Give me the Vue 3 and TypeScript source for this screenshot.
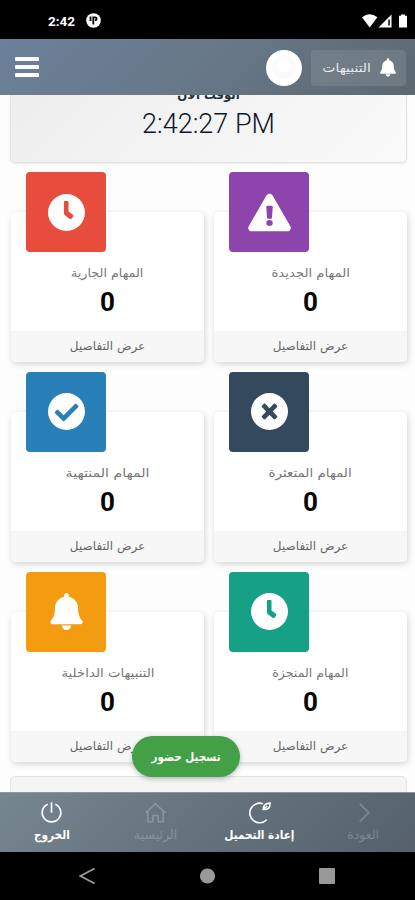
<script setup lang="ts">
type IconName = 'clock' | 'warning' | 'cross' | 'check' | 'bell'

interface TaskCard {
  title: string
  count: number
  color: string
  icon: IconName
  stretch: number
}

const cards: TaskCard[] = [
  { title: 'المهام الجديدة', count: 0, color: '#8e44ad', icon: 'warning', stretch: 1.1 },
  { title: 'المهام الجارية', count: 0, color: '#e74c3c', icon: 'clock', stretch: 1.06 },
  { title: 'المهام المتعثرة', count: 0, color: '#34495e', icon: 'cross', stretch: 1.12 },
  { title: 'المهام المنتهية', count: 0, color: '#2980b9', icon: 'check', stretch: 1.18 },
  { title: 'المهام المنجزة', count: 0, color: '#16a085', icon: 'clock', stretch: 1.05 },
  { title: 'التنبيهات الداخلية', count: 0, color: '#f39c12', icon: 'bell', stretch: 1.11 },
]

const iconPaths: Record<IconName, string> = {
  clock:
    'M256 0a256 256 0 1 1 0 512a256 256 0 1 1 0-512zM220 112V262c0 14 5 24 15 32l62 48c12 9 26 7 35-5l13-18c9-12 7-26-5-35L284 243V112c0-9-6-15-15-15h-34c-9 0-15 6-15 15z',
  warning:
    'M256 32c14 0 27 7 35 20l213 368c7 12 7 27 0 40s-20 20-35 20H43c-15 0-28-8-35-20s-7-28 0-40L221 52c8-13 21-20 35-20zM218 195l8 120c1 10 7 16 15 16h30c8 0 14-6 15-16l8-120c1-12-5-19-16-19h-44c-11 0-17 7-16 19zM256 346a38 34 0 1 0 0 68a38 34 0 1 0 0-68z',
  cross:
    'M256 0a256 256 0 1 1 0 512a256 256 0 1 1 0-512zM154 198l58 58l-58 58c-8 8-8 18 0 26l20 20c8 8 18 8 26 0l56-58l56 58c8 8 18 8 26 0l20-20c8-8 8-18 0-26l-58-58l58-58c8-8 8-18 0-26l-20-20c-8-8-18-8-26 0l-56 58l-56-58c-8-8-18-8-26 0l-20 20c-8 8-8 18 0 26z',
  check:
    'M256 0a256 256 0 1 1 0 512a256 256 0 1 1 0-512zM227 387L417 197c6-6 6-16 0-22l-23-23c-6-6-16-6-22 0L216 308l-73-73c-6-6-16-6-22 0l-23 23c-6 6-6 16 0 22l107 107c6 6 16 6 22 0z',
  bell:
    'M224 0c-18 0-32 14-32 32v20C119 67 64 131 64 208c0 103-30 147-55 171c-6 6-9 13-9 20c0 17 13 33 32 33h384c19 0 32-16 32-33c0-7-3-14-9-20c-25-24-55-68-55-171c0-77-55-141-128-156V32c0-18-14-32-32-32zM160 448c0 35 29 64 64 64s64-29 64-64z',
}

const viewBoxes: Record<IconName, string> = {
  clock: '0 0 512 512',
  warning: '0 0 512 512',
  cross: '0 0 512 512',
  check: '0 0 512 512',
  bell: '0 0 448 512',
}
</script>

<template>
  <div class="screen">
    <div class="status">
      <span class="status-time">2:42</span>
      <svg class="status-app" viewBox="0 0 15 15">
        <circle cx="7.5" cy="7.5" r="7.3" fill="#fff" />
        <path d="M4.500 3.500v4.500M7.300 11.500V4.300h1.600q1.700 0 1.700 1.500t-1.700 1.500" fill="none" stroke="#000" stroke-width="1.800" />
      </svg>
      <span class="grow"></span>
      <svg class="status-signals" viewBox="0 0 46 14">
        <path d="M0 3.200Q7.700-2.600 15.400 3.200L7.700 13.500z" fill="#fff" />
        <path d="M16.500 13.500L29.500 0.500V13.500z" fill="#fff" />
        <path d="M26.300 5.500h1.500v6h-1.500z" fill="#000" />
        <path d="M37 1.800h2V.5h4v1.300h2v11.700h-8z" fill="#fff" />
      </svg>
    </div>

    <header class="topbar">
      <button class="burger" aria-label="القائمة"><i></i><i></i><i></i></button>
      <span class="grow"></span>
      <svg class="avatar" viewBox="0 0 36 36">
        <circle cx="18" cy="18" r="18" fill="#fff" />
        <circle cx="18" cy="17" r="11.500" fill="#fafafa" />
        <circle cx="18" cy="15" r="7" fill="#fff" />
      </svg>
      <button class="alerts">
        <span class="alerts-label">التنبيهات</span>
        <svg class="alerts-bell" viewBox="0 0 448 512"><path :d="iconPaths.bell" fill="#fff" /></svg>
      </button>
    </header>

    <main class="content">
      <section class="clock-card">
        <h2>الوقت الآن</h2>
        <p>2:42:27 PM</p>
      </section>

      <div class="grid" dir="rtl">
        <article v-for="card in cards" :key="card.title" class="card">
          <div class="tile" :style="{ backgroundColor: card.color }">
            <svg :class="['glyph', card.icon]" :viewBox="viewBoxes[card.icon]">
              <path :d="iconPaths[card.icon]" fill="#fff" fill-rule="evenodd" />
            </svg>
          </div>
          <h3 :style="{ transform: `scaleX(${card.stretch})` }">{{ card.title }}</h3>
          <strong>{{ card.count }}</strong>
          <footer><span>عرض التفاصيل</span></footer>
        </article>
      </div>

      <section class="next-card"></section>
      <button class="checkin">تسجيل حضور</button>
    </main>

    <nav class="tabs">
      <a class="tab">
        <svg viewBox="0 0 24 24"><path d="M8 3.300a9.700 9.700 0 1 0 8 0M12 1.300v11" /></svg>
        <span>الخروج</span>
      </a>
      <a class="tab off">
        <svg viewBox="0 0 24 24"><path d="M1.500 12.500L12 3l10.500 9.500M4 10.500v11.200h5.200v-6.500h5.600v6.500H20V10.500" /></svg>
        <span>الرئيسية</span>
      </a>
      <a class="tab">
        <svg viewBox="0 0 24 24"><path d="M19.500 19.500A10.200 10.200 0 1 1 15.500 2.900M16.300 8.800c-.8-3.600 1.600-6.400 6.700-6.600c.3 4.600-2.200 7-6.700 6.600l3.600-3.600" /></svg>
        <span>إعادة التحميل</span>
      </a>
      <a class="tab off back">
        <svg viewBox="0 0 24 24"><path d="M8 3l9.500 9.200L8 21.500" /></svg>
        <span>العودة</span>
      </a>
    </nav>

    <div class="system">
      <svg viewBox="0 0 18 18"><path d="M16.500 1.500L2.500 9l14 7.500" fill="none" stroke="#999" stroke-width="1.900" /></svg>
      <svg viewBox="0 0 18 18"><circle cx="9.500" cy="9" r="7.600" fill="#999" /></svg>
      <svg viewBox="0 0 18 18"><rect x="1" y="1" width="16" height="16" rx="1" fill="#999" /></svg>
    </div>
  </div>
</template>

<style>
body {
  background: #000;
}
</style>

<style scoped>
* {
  box-sizing: border-box;
}
.screen {
  width: 415px;
  height: 900px;
  display: flex;
  flex-direction: column;
  overflow: hidden;
  font-family: 'DejaVu Sans', sans-serif;
  background: #fdfdfd;
}
button {
  border: 0;
  padding: 0;
  font: inherit;
  color: inherit;
  background: none;
}
h2,
h3,
p {
  margin: 0;
}
.grow {
  flex: 1;
}
.status {
  height: 39px;
  flex: none;
  display: flex;
  align-items: center;
  padding: 2px 7px 0 48px;
  background: #000;
  color: #fff;
}
.status-time {
  font: 700 13.5px/16px Roboto, sans-serif;
  width: 38px;
}
.status-app {
  width: 15px;
  height: 15px;
}
.status-signals {
  width: 46px;
  height: 14px;
}
.topbar {
  height: 56px;
  flex: none;
  display: flex;
  align-items: center;
  padding: 1px 9px 0 15px;
  background: linear-gradient(135deg, #6b8099, #68798a 45%, #5d6870);
}
.burger {
  width: 24px;
  display: flex;
  flex-direction: column;
  gap: 4px;
  margin-top: -2px;
}
.burger i {
  height: 4px;
  border-radius: 1px;
  background: #fff;
}
.avatar {
  width: 36px;
  height: 36px;
  margin-right: 9px;
}
.alerts {
  width: 95px;
  height: 36px;
  display: flex;
  align-items: center;
  justify-content: flex-end;
  gap: 9px;
  padding-right: 10px;
  border-radius: 4px;
  background: rgba(255, 255, 255, 0.1);
  color: #e6eaee;
}
.alerts-label {
  font-size: 12px;
  transform: scaleX(1.16);
  transform-origin: right;
}
.alerts-bell {
  width: 16px;
  height: 19px;
}
.content {
  position: relative;
  height: 697px;
  flex: none;
  overflow: hidden;
  padding: 0 8px 0 10px;
}
.clock-card {
  height: 98px;
  margin-top: -30px;
  padding-top: 20px;
  border: 1px solid #e2e2e2;
  border-radius: 5px;
  background: linear-gradient(135deg, #ededed, #fafafa);
  text-align: center;
  box-shadow: 0 1px 2px rgba(0, 0, 0, 0.08);
}
.clock-card h2 {
  font-family: 'DejaVu Sans Condensed', 'DejaVu Sans', sans-serif;
  font-stretch: condensed;
  font-size: 13px;
  line-height: 18px;
  font-weight: 600;
  color: #25303b;
}
.clock-card p {
  margin-top: 2px;
  font: 300 27px/36px Roboto, sans-serif;
  color: #101828;
}
.grid {
  display: grid;
  grid-template-columns: 193px 193px;
  justify-content: space-between;
  row-gap: 49.75px;
  margin: 49px 0 0 1px;
}
.card {
  height: 150px;
  display: flex;
  flex-direction: column;
  align-items: center;
  border-radius: 5px;
  background: #fff;
  box-shadow: 1px 2px 6px rgba(0, 0, 0, 0.17);
}
.tile {
  width: 80px;
  height: 80px;
  flex: none;
  display: grid;
  place-items: center;
  align-self: flex-end;
  margin: -40px 0 0 15px;
  border-radius: 4px;
}
.glyph {
  width: 37px;
  height: 37px;
}
.glyph.warning {
  width: 43px;
  height: 43px;
}
.card h3 {
  margin-top: 11px;
  font-size: 12px;
  line-height: 20px;
  font-weight: 400;
  color: #777;
  white-space: nowrap;
}
.card strong {
  margin-top: 3px;
  font: 700 26px/32px Roboto, sans-serif;
  color: #050505;
}
.card footer {
  width: 100%;
  margin-top: auto;
  height: 31px;
  border-radius: 0 0 5px 5px;
  background: #f7f7f7;
  text-align: center;
  font-size: 12px;
  line-height: 30px;
  color: #666;
}
.next-card {
  height: 60px;
  margin-top: 14px;
  border: 1px solid #e4e4e4;
  border-radius: 5px;
  background: #f5f5f5;
}
.checkin {
  position: absolute;
  left: 132px;
  top: 641px;
  width: 108px;
  height: 41px;
  border-radius: 21px;
  background: #43a047;
  color: #fff;
  font-family: 'DejaVu Sans Condensed', 'DejaVu Sans', sans-serif;
  font-stretch: condensed;
  font-size: 11.5px;
  font-weight: 600;
  box-shadow: 0 2px 5px rgba(0, 0, 0, 0.25);
}
.tabs {
  height: 60px;
  flex: none;
  display: grid;
  grid-template-columns: repeat(4, 1fr);
  background: linear-gradient(135deg, #76868f, #66747f 45%, #56616a);
  border-top: 1px solid #8c969d;
}
.tab {
  display: flex;
  flex-direction: column;
  align-items: center;
  padding-top: 8px;
  color: #fff;
  font-family: 'DejaVu Sans Condensed', 'DejaVu Sans', sans-serif;
  font-stretch: condensed;
  font-size: 11.7px;
  font-weight: 600;
  line-height: 22px;
  white-space: nowrap;
}
.tab svg {
  width: 23px;
  height: 23px;
  fill: none;
  stroke: currentColor;
  stroke-width: 1.7;
}
.tab.off {
  color: rgba(255, 255, 255, 0.22);
  font-family: 'DejaVu Sans', sans-serif;
  font-stretch: normal;
  font-size: 12.5px;
  font-weight: 400;
}
.system {
  height: 48px;
  flex: none;
  display: flex;
  justify-content: space-between;
  align-items: center;
  padding: 0 79px 0 78px;
  background: #000;
}
.system svg {
  width: 18px;
  height: 18px;
}
</style>
